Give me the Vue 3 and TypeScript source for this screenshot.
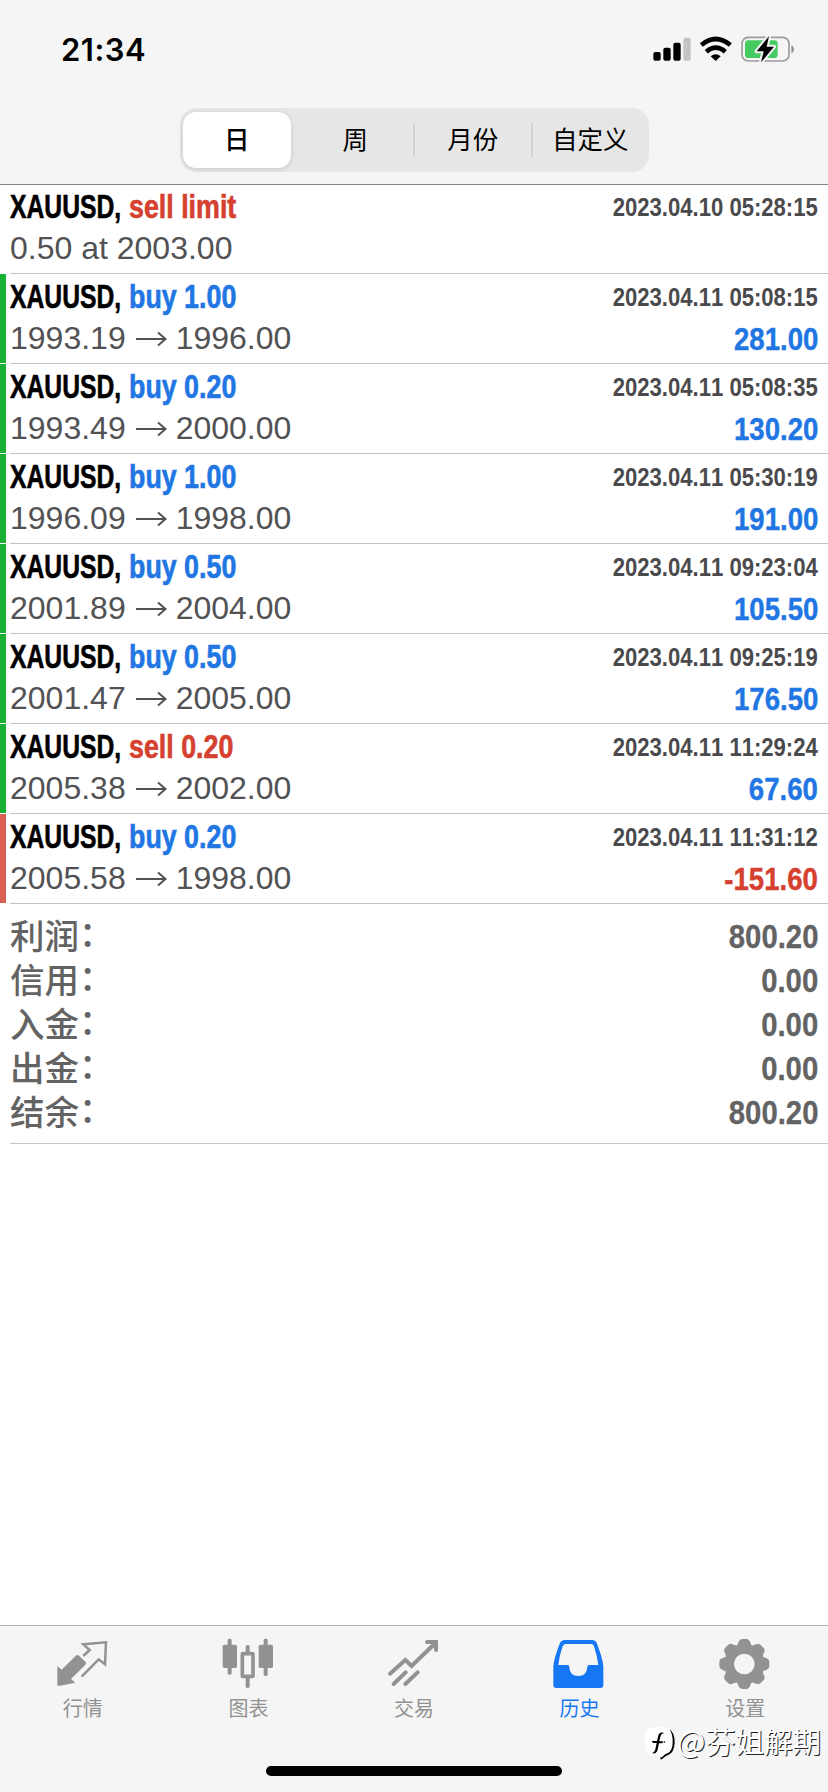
<script setup lang="ts">
interface Deal {
  action: string
  side: 'buy' | 'sell'
  prices: string[]
  time: string
  profit?: string
}

const periods: string[] = ['日', '周', '月份', '自定义']

const deals: Deal[] = [
  { action: 'sell limit', side: 'sell', prices: ['0.50 at 2003.00'], time: '2023.04.10 05:28:15' },
  { action: 'buy 1.00', side: 'buy', prices: ['1993.19', '1996.00'], time: '2023.04.11 05:08:15', profit: '281.00' },
  { action: 'buy 0.20', side: 'buy', prices: ['1993.49', '2000.00'], time: '2023.04.11 05:08:35', profit: '130.20' },
  { action: 'buy 1.00', side: 'buy', prices: ['1996.09', '1998.00'], time: '2023.04.11 05:30:19', profit: '191.00' },
  { action: 'buy 0.50', side: 'buy', prices: ['2001.89', '2004.00'], time: '2023.04.11 09:23:04', profit: '105.50' },
  { action: 'buy 0.50', side: 'buy', prices: ['2001.47', '2005.00'], time: '2023.04.11 09:25:19', profit: '176.50' },
  { action: 'sell 0.20', side: 'sell', prices: ['2005.38', '2002.00'], time: '2023.04.11 11:29:24', profit: '67.60' },
  { action: 'buy 0.20', side: 'buy', prices: ['2005.58', '1998.00'], time: '2023.04.11 11:31:12', profit: '-151.60' },
]

const totals: [string, string][] = [
  ['利润', '800.20'],
  ['信用', '0.00'],
  ['入金', '0.00'],
  ['出金', '0.00'],
  ['结余', '800.20'],
]

const isLoss = (deal: Deal): boolean => !!deal.profit && deal.profit.startsWith('-')
</script>

<template>
  <div class="screen">
    <header class="header">
      <div class="status">
        <span class="clock">21:34</span>
        <svg class="indicators" viewBox="710 100 440 95">
          <rect x="717" y="157" width="22" height="26" rx="6" />
          <rect x="747" y="144" width="22" height="39" rx="6" />
          <rect x="777" y="129" width="22" height="54" rx="6" />
          <rect x="807" y="114" width="22" height="69" rx="6" fill="#c4c4c4" />
          <g fill="none" stroke="#000" stroke-width="14">
            <path d="M861 136 Q904 100 948 136" />
            <path d="M876 156 Q904 132 933 156" />
          </g>
          <path d="M889 170 Q904 158 919 170 L904 184 Z" />
          <rect x="983" y="113" width="141" height="71" rx="19" fill="none" stroke="#9b9b9d" stroke-width="5" />
          <path d="M1131 137 Q1139 140 1139 149 Q1139 158 1131 161 Z" fill="#8f8f91" />
          <rect x="992" y="122" width="98" height="53" rx="10" fill="#46cb62" />
          <path d="M1064 109 L1027 155 H1048 L1040 188 L1079 141 H1057 Z" stroke="#f5f5f5" stroke-width="12" stroke-linejoin="round" />
          <path d="M1064 109 L1027 155 H1048 L1040 188 L1079 141 H1057 Z" />
        </svg>
      </div>
      <nav class="segments">
        <button v-for="(period, i) in periods" :key="period" class="segment" :class="{ active: i === 0 }">
          {{ period }}
        </button>
      </nav>
    </header>

    <main class="history">
      <article v-for="deal in deals" :key="deal.time" class="deal" :class="{ gain: deal.profit && !isLoss(deal), loss: isLoss(deal) }">
        <div class="body">
          <div class="line first">
            <div class="title">
              <span class="symbol">XAUUSD,</span>
              <span class="action" :class="deal.side">{{ deal.action }}</span>
            </div>
            <time class="time">{{ deal.time }}</time>
          </div>
          <div class="line second">
            <div class="prices">
              <template v-for="(price, i) in deal.prices" :key="i">
                <svg v-if="i > 0" class="arrow" viewBox="0 0 50 24"><path d="M10 12 H39 M32 5.5 L39.5 12 L32 18.5" /></svg>
                <span>{{ price }}</span>
              </template>
            </div>
            <span v-if="deal.profit" class="profit" :class="isLoss(deal) ? 'sell' : 'buy'">{{ deal.profit }}</span>
          </div>
        </div>
      </article>

      <section class="totals">
        <div v-for="[label, value] in totals" :key="label" class="total">
          <span class="label">{{ label }}<span class="colon">：</span></span>
          <span class="value">{{ value }}</span>
        </div>
      </section>
    </main>

    <footer class="footer">
      <nav class="tabs">
        <a class="tab">
          <svg viewBox="167 81 162 162">
            <path d="M228 136 Q232 133 236 137 L256 156 Q259 160 255 164 L212 207 L225 218 L176 228 Q171 228 171 223 V168 L184 179 Z" />
            <path d="M249 138 L268 120 L249 103 L317 97 L314 163 L295 148 L244 200" fill="none" stroke="currentColor" stroke-width="7.5" />
          </svg>
          行情
        </a>
        <a class="tab">
          <svg viewBox="664 81 162 162">
            <rect x="669" y="104" width="43" height="70" rx="5" />
            <rect x="684" y="86" width="12" height="108" rx="5" />
            <rect x="777" y="104" width="43" height="70" rx="5" />
            <rect x="792" y="86" width="12" height="112" rx="5" />
            <rect x="728" y="131" width="32" height="68" rx="2" fill="none" stroke="currentColor" stroke-width="11" />
            <rect x="738" y="105" width="12" height="25" rx="5" />
            <rect x="738" y="201" width="12" height="33" rx="5" />
          </svg>
          图表
        </a>
        <a class="tab">
          <svg viewBox="261 81 162 162">
            <g fill="none" stroke="currentColor" stroke-width="12" stroke-linecap="round">
              <path d="M270 191 L316 150 L335 168 L406 99" stroke-linejoin="miter" />
              <path d="M381 96 H408 V120" />
              <path d="M281 222 L317 187 M316 222 L353 187" />
            </g>
          </svg>
          交易
        </a>
        <a class="tab current">
          <svg viewBox="758 81 162 162">
            <path d="M794 90 H875 Q886 90 890 101 Q908 148 909 169 V225 Q909 234 900 234 H768 Q759 234 759 225 V169 Q761 145 778 101 Q782 90 794 90 Z" />
            <path d="M797 102 Q790 102 787 109 Q777 137 774 165 H802 Q807 165 807 171 Q808 198 834 198 Q859 198 861 171 Q861 165 866 165 H894 Q890 137 881 109 Q879 102 873 102 Z" fill="#f5f5f5" />
          </svg>
          历史
        </a>
        <a class="tab">
          <svg viewBox="353 81 162 162">
            <circle cx="432" cy="162" r="58" />
            <path v-for="n in 8" :key="n" d="M407 110 Q412 104 415 95 Q418 87 425 87 H439 Q446 87 449 95 Q452 104 457 110 Z" :transform="`rotate(${n * 45} 432 162)`" />
            <circle cx="432" cy="162" r="31" fill="#f5f5f5" />
          </svg>
          设置
        </a>
      </nav>
      <div class="home-indicator"></div>
      <div class="watermark">
        <svg viewBox="126 350 96 104">
          <rect x="130" y="354" width="86" height="84" rx="24" fill="#fff" />
          <path d="M203 360 Q219 371 218 401 Q216 430 200 436 Q190 439 187 444 L177 451 L174 443 Q178 447 184 440 Q188 434 198 431 Q211 424 212 401 Q213 376 203 360 Z" />
          <path d="M188 372 Q172 364 168 382 L165 395 H149 L153 401 H164 L160 420 Q157 431 150 430 Q158 437 166 425 L171 402 H181 L183 396 H172 L175 382 Q178 371 188 372 Z" />
          <circle cx="187" cy="398" r="2.5" />
        </svg>
        <span class="handle">@芬姐解期</span>
      </div>
    </footer>
  </div>
</template>

<style>
body {
  margin: 0;
  background: #fff;
}
</style>

<style scoped>
.screen {
  width: 828px;
  height: 1792px;
  display: flex;
  flex-direction: column;
  overflow: hidden;
  background: #fff;
  font-family: "Liberation Sans", "Noto Sans CJK SC", sans-serif;
  font-kerning: none;
}

.header {
  box-sizing: border-box;
  height: 185px;
  flex: none;
  background: #f5f5f5;
  border-bottom: 1px solid #858585;
}

.status {
  height: 108px;
  box-sizing: border-box;
  padding: 33px 30px 0 61px;
  display: flex;
  justify-content: space-between;
  align-items: flex-start;
}

.clock {
  font: 600 31px/34px Inter, sans-serif;
  letter-spacing: 0.5px;
}

.indicators {
  width: 146.7px;
  height: 31.7px;
}

.segments {
  box-sizing: border-box;
  width: 469px;
  height: 64px;
  margin-left: 180px;
  padding: 4px 0 4px 3px;
  display: flex;
  border-radius: 17px;
  background: #e6e6e6;
}

.segment {
  position: relative;
  width: 118px;
  padding: 0 0 4px;
  border: 0;
  background: none;
  color: #000;
  font: 400 25.5px/52px "Noto Sans CJK SC", sans-serif;
  text-align: center;
}

.segment.active {
  width: 108px;
  margin-right: 6px;
  border-radius: 13px;
  background: #fff;
  box-shadow: 0 1px 5px rgba(0, 0, 0, 0.13);
  font-weight: 500;
}

.segment:nth-child(n + 3)::before {
  content: "";
  position: absolute;
  left: -1px;
  top: 11px;
  width: 2px;
  height: 34px;
  background: #d2d2d3;
}

.history {
  flex: 1;
}

.deal {
  box-sizing: border-box;
  height: 90px;
  padding-left: 10px;
}

.deal:first-child {
  height: 89px;
}

.deal:first-child .first {
  padding-top: 4px;
}

.deal.gain {
  background: linear-gradient(#18b035, #18b035) no-repeat 0 0 / 6px 89px;
}

.deal.loss {
  background: linear-gradient(#dc5f53, #dc5f53) no-repeat 0 0 / 6px 89px;
}

.body {
  box-sizing: border-box;
  height: 100%;
  padding-right: 10px;
  border-bottom: 1px solid #c3c3c5;
}

.line {
  display: flex;
  justify-content: space-between;
  align-items: flex-start;
  white-space: nowrap;
}

.first {
  padding-top: 5px;
  line-height: 36px;
}

.second {
  line-height: 47px;
}

.title {
  display: flex;
  font-size: 32.5px;
  font-weight: 700;
  -webkit-text-stroke: 0.6px currentColor;
}

.symbol {
  width: 118.5px;
  transform: scaleX(0.76);
  transform-origin: left;
}

.action {
  transform: scaleX(0.825);
  transform-origin: left;
}

.buy {
  color: #2176e3;
}

.sell {
  color: #d5402f;
}

.time {
  color: #4a4a4c;
  font-size: 25.5px;
  font-weight: 700;
  transform: scaleX(0.866);
  transform-origin: right;
}

.prices {
  display: flex;
  align-items: center;
  color: #525254;
  font-size: 32px;
}

.arrow {
  width: 50px;
  height: 24px;
  fill: none;
  stroke: #525254;
  stroke-width: 2;
}

.profit {
  padding-top: 1px;
  font-size: 31.5px;
  font-weight: 700;
  -webkit-text-stroke: 0.4px currentColor;
  transform: scaleX(0.875);
  transform-origin: right;
}

.totals {
  margin-left: 10px;
  padding: 10px 10px 9px 0;
  border-bottom: 1px solid #c6c6c8;
}

.total {
  display: flex;
  justify-content: space-between;
  height: 44px;
  color: #636363;
  line-height: 44px;
}

.label {
  padding-top: 1px;
  font-size: 34.5px;
  font-weight: 500;
}

.colon {
  position: relative;
  top: -3px;
}

.value {
  padding-top: 1px;
  font-size: 33.5px;
  font-weight: 700;
  -webkit-text-stroke: 0.3px currentColor;
  transform: scaleX(0.875);
  transform-origin: right;
}

.footer {
  position: relative;
  box-sizing: border-box;
  height: 167px;
  flex: none;
  border-top: 1px solid #b0b0b1;
  background: #f5f5f5;
}

.tabs {
  display: flex;
  height: 140px;
}

.tab {
  flex: 1;
  display: flex;
  flex-direction: column;
  align-items: center;
  padding-top: 11px;
  color: #929292;
  font: 400 20px/24px "Noto Sans CJK SC", sans-serif;
}

.tab svg {
  width: 54px;
  height: 54px;
  margin-bottom: 5px;
  fill: currentColor;
}

.tab.current {
  color: #1677f5;
}

.home-indicator {
  width: 296px;
  height: 10px;
  margin: 0 auto;
  border-radius: 5px;
  background: #000;
}

.watermark {
  position: absolute;
  right: 7px;
  top: 99px;
  display: flex;
  align-items: flex-start;
}

.watermark svg {
  width: 32px;
  height: 34.7px;
  margin: 1px 1px 0 0;
}

.handle {
  margin-top: -2px;
  color: #fff;
  font: 400 28.5px/34px "Noto Sans CJK SC", sans-serif;
  text-shadow: 1px 1px 0.5px #222;
}

.handle::first-letter {
  font-size: 30px;
}
</style>
